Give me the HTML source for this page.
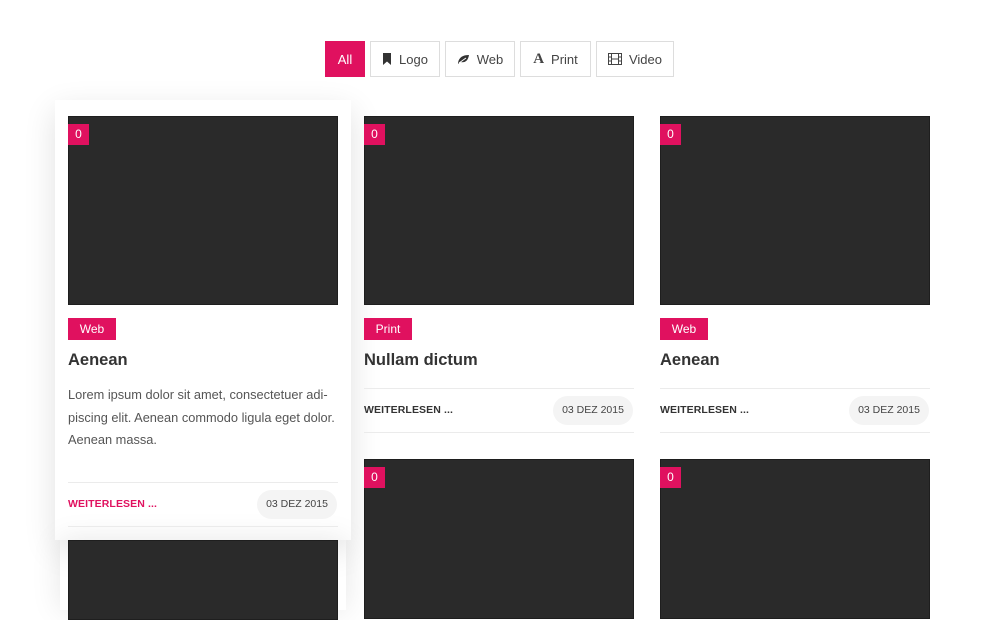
<!DOCTYPE html>
<html><head><meta charset="utf-8"><style>
*{box-sizing:border-box;margin:0;padding:0}
body{width:1000px;height:610px;overflow:hidden;background:#fff;font-family:"Liberation Sans",Arial,sans-serif;position:relative;color:#333}
.a{position:absolute}
.btn{position:absolute;top:41px;height:36px;border:1px solid #ddd;background:#fff;font-size:13px;color:#444;display:flex;align-items:center;justify-content:center;gap:7px}
.img{position:absolute;width:270px;background:#2a2a2a;border:1px solid #1e1e1e}
.badge{position:absolute;left:-1px;top:7px;width:21px;height:21px;background:#e0115f;color:#fff;font-size:12px;text-align:center;line-height:21px}
.tag{position:absolute;height:22px;width:48px;background:#e0115f;color:#fff;font-size:12px;line-height:22px;text-align:center}
.title{position:absolute;font-size:16.5px;font-weight:bold;color:#333}
.line{position:absolute;width:270px;height:1px;background:#ebebeb}
.more{position:absolute;font-size:10.5px;font-weight:bold;color:#333;letter-spacing:.1px}
.date{position:absolute;width:80px;height:29px;border-radius:15px;background:#f4f4f4;font-size:10.5px;color:#444;text-align:center;line-height:29px}
</style></head><body>
<div class="btn" style="left:325px;width:40px;background:#e0115f;border-color:#e0115f;color:#fff">All</div>
<div class="btn" style="left:370px;width:70px"><svg width="10" height="12" viewBox="0 0 10 12"><path d="M1 0h8v12L5 8.5 1 12z" fill="#333"/></svg>Logo</div>
<div class="btn" style="left:445px;width:70px"><svg width="13" height="10" viewBox="0 0 13 10"><path d="M1 9C2 3 6 1 12 1 11 7 8 9 3 8L1 10z" fill="#333"/><path d="M2 9 9 4" stroke="#fff" stroke-width="1"/></svg>Web</div>
<div class="btn" style="left:520px;width:71px"><span style="font-family:'Liberation Serif',serif;font-weight:bold;font-size:15px">A</span>Print</div>
<div class="btn" style="left:596px;width:78px"><svg width="14" height="12" viewBox="0 0 14 12"><rect x=".5" y=".5" width="13" height="11" fill="none" stroke="#444"/><path d="M3.5 .5v11M10.5 .5v11M.5 4h3M.5 8h3M10.5 4h3M10.5 8h3M3.5 6h7" stroke="#444" fill="none"/></svg>Video</div>

<div class="a" style="left:55px;top:100px;width:296px;height:440px;background:#fff;box-shadow:0 10px 30px rgba(0,0,0,.12)"></div>
<div class="a" style="left:60px;top:540px;width:286px;height:70px;box-shadow:0 0 30px rgba(0,0,0,.1)"></div>

<div class="img" style="left:68px;top:116px;height:189px"><div class="badge">0</div></div>
<div class="tag" style="left:68px;top:318px">Web</div>
<div class="title" style="left:68px;top:351px">Aenean</div>
<div class="a" style="left:68px;top:384px;width:275px;font-size:12.8px;line-height:22.5px;color:#555">Lorem ipsum dolor sit amet, consectetuer adi-<br>piscing elit. Aenean commodo ligula eget dolor.<br>Aenean massa.</div>
<div class="line" style="left:68px;top:482px"></div>
<div class="more" style="left:68px;top:498px;color:#e0115f">WEITERLESEN ...</div>
<div class="date" style="left:257px;top:490px">03 DEZ 2015</div>
<div class="line" style="left:68px;top:526px"></div>
<div class="img" style="left:68px;top:540px;height:80px"></div>

<div class="img" style="left:364px;top:116px;height:189px"><div class="badge">0</div></div>
<div class="tag" style="left:364px;top:318px">Print</div>
<div class="title" style="left:364px;top:351px">Nullam dictum</div>
<div class="line" style="left:364px;top:388px"></div>
<div class="more" style="left:364px;top:404px">WEITERLESEN ...</div>
<div class="date" style="left:553px;top:396px">03 DEZ 2015</div>
<div class="line" style="left:364px;top:432px"></div>
<div class="img" style="left:364px;top:459px;height:160px"><div class="badge">0</div></div>

<div class="img" style="left:660px;top:116px;height:189px"><div class="badge">0</div></div>
<div class="tag" style="left:660px;top:318px">Web</div>
<div class="title" style="left:660px;top:351px">Aenean</div>
<div class="line" style="left:660px;top:388px"></div>
<div class="more" style="left:660px;top:404px">WEITERLESEN ...</div>
<div class="date" style="left:849px;top:396px">03 DEZ 2015</div>
<div class="line" style="left:660px;top:432px"></div>
<div class="img" style="left:660px;top:459px;height:160px"><div class="badge">0</div></div>
</body></html>
